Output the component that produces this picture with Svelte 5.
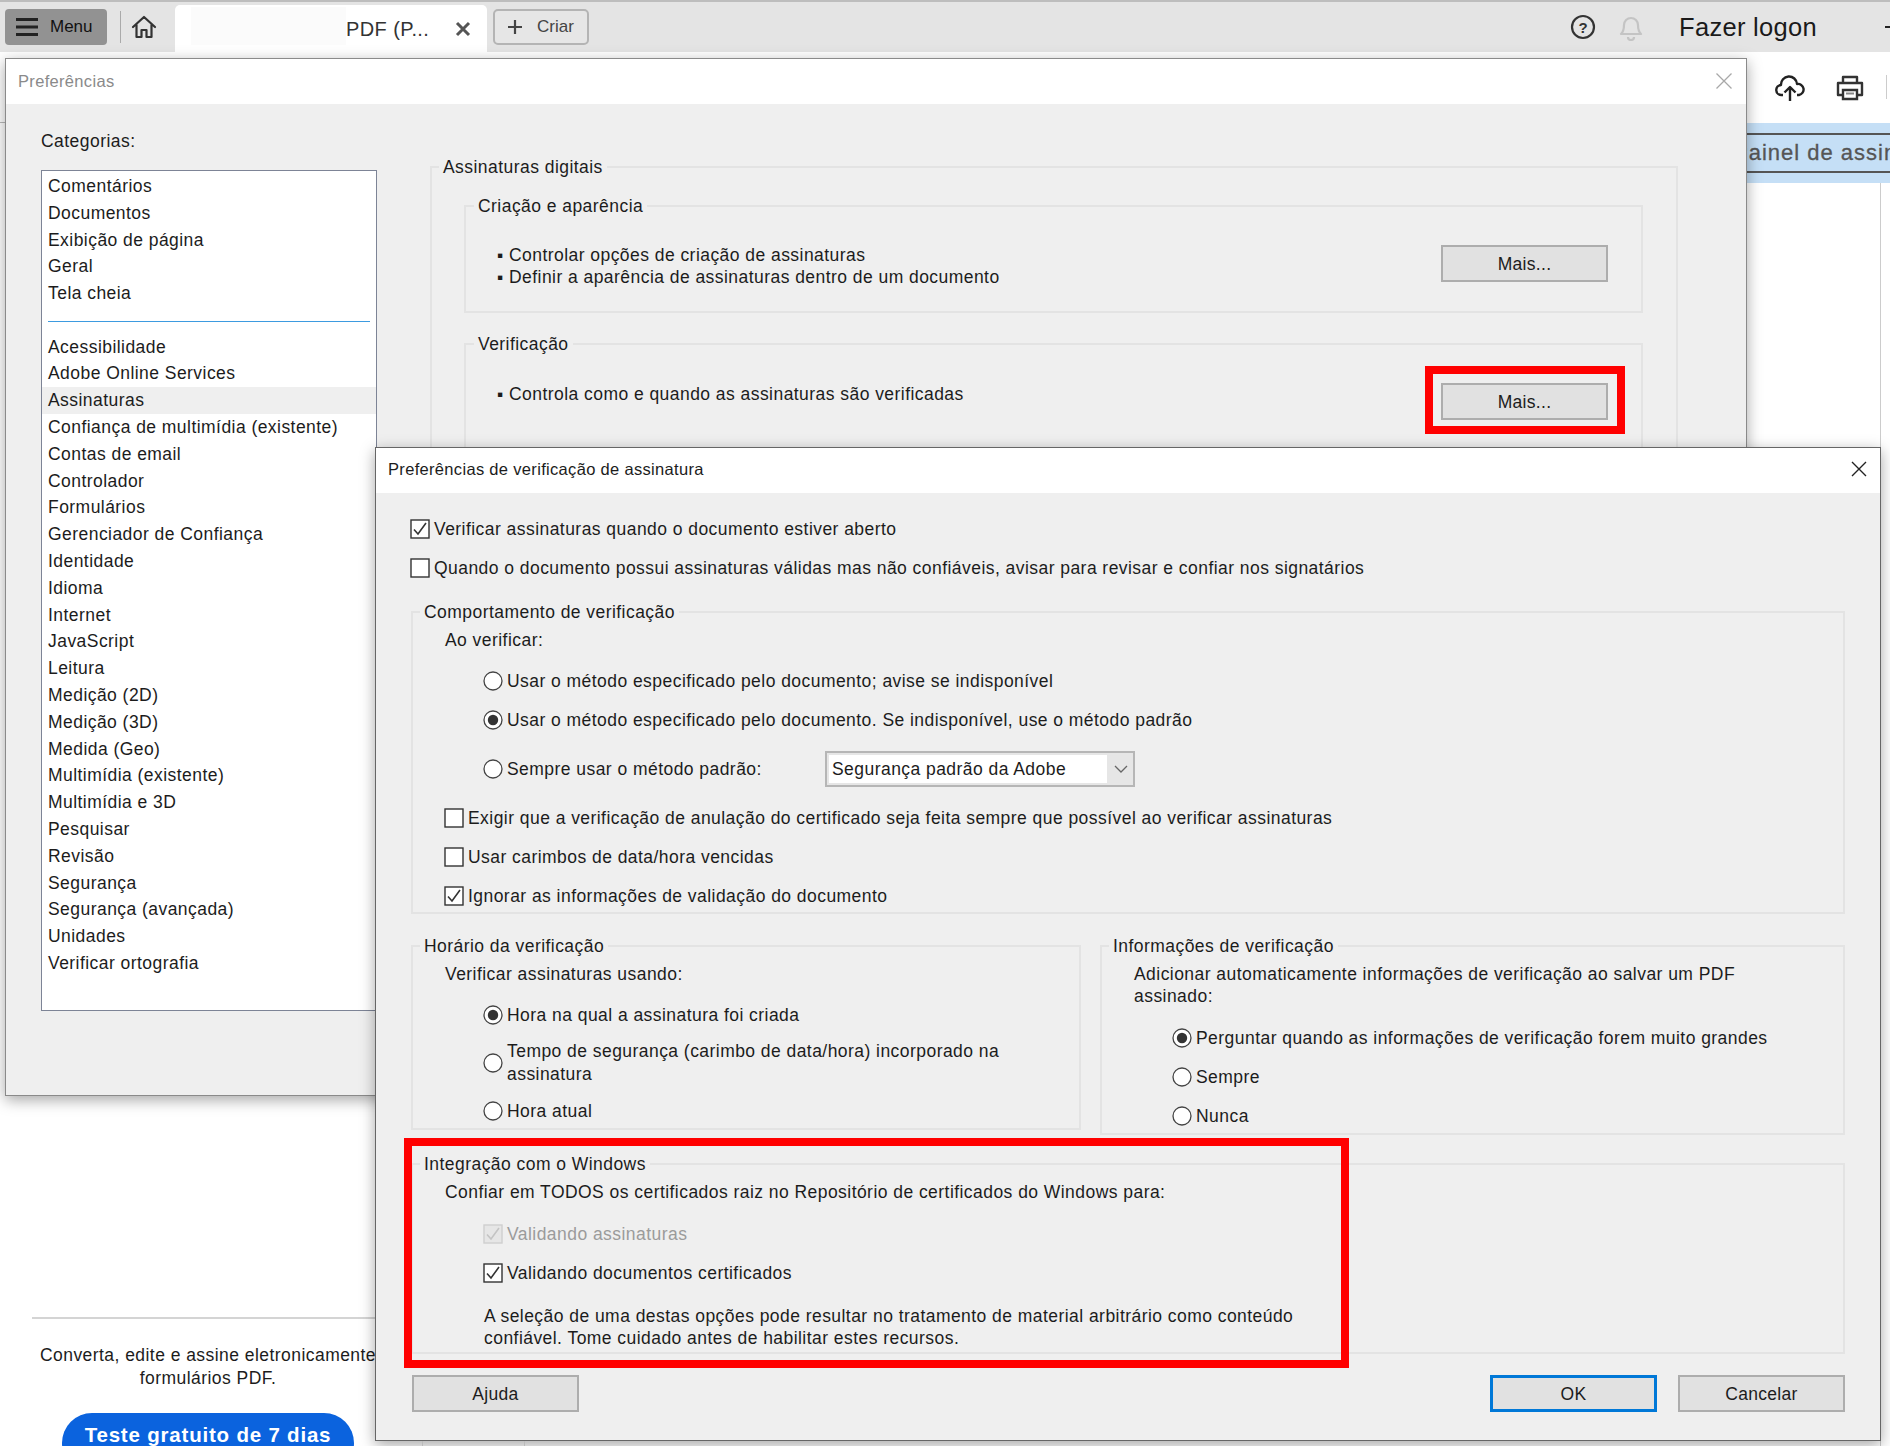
<script>
  const top = ['Comentários','Documentos','Exibição de página','Geral','Tela cheia'];
  const rest = ['Acessibilidade','Adobe Online Services','Assinaturas','Confiança de multimídia (existente)','Contas de email','Controlador','Formulários','Gerenciador de Confiança','Identidade','Idioma','Internet','JavaScript','Leitura','Medição (2D)','Medição (3D)','Medida (Geo)','Multimídia (existente)','Multimídia e 3D','Pesquisar','Revisão','Segurança','Segurança (avançada)','Unidades','Verificar ortografia'];
</script>

{#snippet check(label, on = false, off = false)}
  <label class="opt" class:off>
    <svg class="mark" width="20" height="20" viewBox="0 0 20 20">
      <rect x="1" y="1" width="18" height="18" fill={off ? '#e6e6e6' : '#fff'} stroke={off ? '#cfcfcf' : '#333'} stroke-width="1.4"/>
      {#if on}<path d="M4 10.5l4 4.5 8-11" fill="none" stroke={off ? '#c4c4c4' : '#333'} stroke-width="1.6"/>{/if}
    </svg>
    <span>{label}</span>
  </label>
{/snippet}

{#snippet radio(label, on = false)}
  <label class="opt">
    <svg class="mark" width="20" height="20" viewBox="0 0 20 20">
      <circle cx="10" cy="10" r="9" fill="#fff" stroke="#444" stroke-width="1.3"/>
      {#if on}<circle cx="10" cy="10" r="5.2" fill="#333"/>{/if}
    </svg>
    <span>{label}</span>
  </label>
{/snippet}

<div class="page">
  <header class="topbar">
    <button class="menu">
      <svg width="22" height="20" viewBox="0 0 22 20"><path d="M0 2.5h22M0 10h22M0 17.500h22" stroke="#222" stroke-width="3"/></svg>
      <span>Menu</span>
    </button>
    <i class="vsep"></i>
    <svg class="home" width="26" height="26" viewBox="0 0 26 26"><path d="M2 13L13 3l11 10M5.500 11v12h5v-7h5v7h5V11" fill="none" stroke="#333" stroke-width="2.200" stroke-linejoin="round" stroke-linecap="round"/></svg>
    <div class="tab">
      <i class="redact"></i>
      <span class="tabname">PDF (P...</span>
      <svg width="16" height="16" viewBox="0 0 16 16"><path d="M2 2l12 12M14 2L2 14" stroke="#555" stroke-width="3"/></svg>
    </div>
    <button class="create">
      <svg width="16" height="16" viewBox="0 0 16 16"><path d="M8 1v14M1 8h14" stroke="#444" stroke-width="2.200"/></svg>
      <span>Criar</span>
    </button>
    <div class="grow"></div>
    <svg width="26" height="26" viewBox="0 0 26 26"><circle cx="13" cy="13" r="11" fill="none" stroke="#333" stroke-width="2.200"/><text x="13" y="18.500" text-anchor="middle" class="q">?</text></svg>
    <svg class="bell" width="26" height="28" viewBox="0 0 26 28"><path d="M3 21c2-2 3-4 3-9a7 7 0 0 1 14 0c0 5 1 7 3 9zM10 24a3 3 0 0 0 6 0" fill="none" stroke="#c4c4c4" stroke-width="2.200" stroke-linejoin="round"/></svg>
    <span class="logon">Fazer logon</span>
    <i class="tick"></i>
  </header>

  <div class="toolbar">
    <svg width="30" height="28" viewBox="0 0 30 28"><path d="M8 20H6.500a5 5 0 0 1-.5-10 8 8 0 0 1 16-1 5.500 5.500 0 0 1 2 11h-2M15 26V12M9.500 17.500L15 12l5.500 5.500" fill="none" stroke="#222" stroke-width="2.400" stroke-linejoin="round"/></svg>
    <svg class="printer" width="28" height="26" viewBox="0 0 28 26"><path d="M7 8V2h14v6M7 20H2V8h24v12h-5" fill="none" stroke="#333" stroke-width="2.400" stroke-linejoin="round"/><path d="M7 15h14v9H7z" fill="none" stroke="#333" stroke-width="2.400"/><path d="M10 18.500h8" stroke="#888" stroke-width="2"/></svg>
    <i class="toolsep"></i>
  </div>

  <div class="band"><span class="signpanel">Painel de assinaturas</span></div>

  <main class="content">
    <aside class="promo">
      <hr />
      <p>Converta, edite e assine eletronicamente<br />formulários PDF.</p>
      <button class="trial">Teste gratuito de 7 dias</button>
    </aside>
  </main>

  <i class="notch"></i>

  <section class="dlg prefs">
    <div class="title muted">
      <span>Preferências</span>
      <svg width="16" height="16" viewBox="0 0 16 16"><path d="M.5.500l15 15M15.500.500l-15 15" stroke="#a8a8a8" stroke-width="1.300"/></svg>
    </div>
    <div class="prefbody">
      <div class="cats">
        <div class="catlabel">Categorias:</div>
        <div class="list">
          {#each top as t}<div class="item">{t}</div>{/each}
          <div class="sep"></div>
          {#each rest as t}<div class="item" class:sel={t === 'Assinaturas'}>{t}</div>{/each}
        </div>
      </div>
      <div class="panel">
        <fieldset class="outer">
          <legend>Assinaturas digitais</legend>
          <fieldset class="inner create-fs">
            <legend>Criação e aparência</legend>
            <div class="infobox">
              <div class="bullets">
                <div>▪ Controlar opções de criação de assinaturas</div>
                <div>▪ Definir a aparência de assinaturas dentro de um documento</div>
              </div>
              <button class="btn">Mais...</button>
            </div>
          </fieldset>
          <fieldset class="inner verify-fs">
            <legend>Verificação</legend>
            <div class="infobox">
              <div class="bullets one">▪ Controla como e quando as assinaturas são verificadas</div>
              <button class="btn">Mais...</button>
            </div>
          </fieldset>
        </fieldset>
      </div>
    </div>
  </section>
  <div class="redbox one-red"></div>

  <section class="dlg verify">
    <div class="title">
      <span>Preferências de verificação de assinatura</span>
      <svg width="16" height="16" viewBox="0 0 16 16"><path d="M1 1l14 14M15 1L1 15" stroke="#222" stroke-width="1.400"/></svg>
    </div>
    <div class="vbody">
      <div class="stack">
        {@render check('Verificar assinaturas quando o documento estiver aberto', true)}
        {@render check('Quando o documento possui assinaturas válidas mas não confiáveis, avisar para revisar e confiar nos signatários')}
      </div>

      <fieldset class="fs behave">
        <legend>Comportamento de verificação</legend>
        <div class="line">Ao verificar:</div>
        <div class="stack indent m19">
          {@render radio('Usar o método especificado pelo documento; avise se indisponível')}
          {@render radio('Usar o método especificado pelo documento. Se indisponível, use o método padrão', true)}
        </div>
        <div class="selrow indent">
          {@render radio('Sempre usar o método padrão:')}
          <div class="select">
            <span class="selval">Segurança padrão da Adobe</span>
            <svg width="14" height="8" viewBox="0 0 14 8"><path d="M1 1l6 6 6-6" fill="none" stroke="#666" stroke-width="1.300"/></svg>
          </div>
        </div>
        <div class="stack m20">
          {@render check('Exigir que a verificação de anulação do certificado seja feita sempre que possível ao verificar assinaturas')}
          {@render check('Usar carimbos de data/hora vencidas')}
          {@render check('Ignorar as informações de validação do documento', true)}
        </div>
      </fieldset>

      <div class="twocol">
        <fieldset class="fs when">
          <legend>Horário da verificação</legend>
          <div class="line">Verificar assinaturas usando:</div>
          <div class="stack indent m19 whenstack">
            {@render radio('Hora na qual a assinatura foi criada', true)}
            {@render radio('Tempo de segurança (carimbo de data/hora) incorporado na assinatura')}
            {@render radio('Hora atual')}
          </div>
        </fieldset>
        <fieldset class="fs info">
          <legend>Informações de verificação</legend>
          <div class="line">Adicionar automaticamente informações de verificação ao salvar um PDF<br />assinado:</div>
          <div class="stack indent m20">
            {@render radio('Perguntar quando as informações de verificação forem muito grandes', true)}
            {@render radio('Sempre')}
            {@render radio('Nunca')}
          </div>
        </fieldset>
      </div>

      <fieldset class="fs windows">
        <legend>Integração com o Windows</legend>
        <div class="line">Confiar em TODOS os certificados raiz no Repositório de certificados do Windows para:</div>
        <div class="stack indent m20">
          {@render check('Validando assinaturas', true, true)}
          {@render check('Validando documentos certificados', true)}
        </div>
        <p class="warn">A seleção de uma destas opções pode resultar no tratamento de material arbitrário como conteúdo<br />confiável. Tome cuidado antes de habilitar estes recursos.</p>
      </fieldset>

      <div class="actions">
        <button class="btn">Ajuda</button>
        <div class="grow"></div>
        <button class="btn primary">OK</button>
        <button class="btn">Cancelar</button>
      </div>
    </div>
  </section>
  <div class="redbox two-red"></div>
  <i class="under a"></i>
  <i class="under b"></i>
</div>

<style>
  :global(body) { margin: 0; background: #fff; }
  .page {
    position: relative; width: 1890px; height: 1446px; overflow: hidden;
    display: flex; flex-direction: column; background: #fff; color: #1c1c1c;
    font-family: "Liberation Sans", Arial, sans-serif; font-size: 17.5px; line-height: 22px; letter-spacing: .45px;
  }
  i { display: block; }
  button { font: inherit; color: inherit; padding: 0; cursor: default; }
  .grow { flex: 1; }

  .topbar {
    height: 52px; box-sizing: border-box; flex: none; display: flex; align-items: center; letter-spacing: 0;
    padding-left: 5px; background: #e4e4e4; border-top: 2px solid #bdbdbd;
  }
  .menu {
    width: 102px; height: 36px; background: #929292; border: 0; border-radius: 4px;
    display: flex; align-items: center; gap: 12px; padding-left: 11px; color: #111; font-size: 17px;
  }
  .vsep { width: 1px; height: 32px; background: #aaa; margin-left: 13px; }
  .home { margin-left: 10px; }
  .tab {
    width: 312px; height: 47px; margin-left: 18px; align-self: flex-end; background: #fff;
    border-radius: 5px 5px 0 0; position: relative; display: flex; align-items: center;
    padding-left: 171px; box-sizing: border-box;
  }
  .redact { position: absolute; left: 16px; top: 2px; width: 155px; height: 38px; background: #fbfbfb; }
  .tabname { font-size: 20px; color: #333; width: 109px; letter-spacing: .4px; }
  .create {
    width: 96px; height: 36px; margin-left: 6px; background: #e6e6e6; border: 2px solid #b4b4b4;
    border-radius: 5px; display: flex; align-items: center; gap: 14px; padding-left: 12px; color: #444; font-size: 17px;
  }
  .q { font: bold 15px "Liberation Sans", sans-serif; fill: #333; }
  .bell { margin-left: 22px; }
  .logon { font-size: 25.500px; margin-left: 35px; color: #1a1a1a; letter-spacing: .3px; }
  .tick { width: 5px; height: 2px; background: #222; margin-left: 68px; }

  .toolbar {
    height: 71px; flex: none; display: flex; align-items: flex-start; box-sizing: border-box;
    padding: 23px 0 0 1775px; background: #fff;
  }
  .printer { margin-left: 31px; }
  .toolsep { width: 1px; height: 24px; margin-left: 22px; background: #ccc; }
  .band {
    height: 60px; flex: none; box-sizing: border-box; background: #c5dff6; margin-left: 1700px; padding: 10px 0 0 24px;
    white-space: nowrap; overflow: hidden;
  }
  .signpanel {
    display: block; width: 300px; height: 40px; box-sizing: border-box; border-top: 2px solid #555; border-bottom: 2px solid #555;
    padding-left: 9px; font-size: 22px; line-height: 36px; color: #555; letter-spacing: 1px;
    -webkit-text-stroke: .3px #555;
  }
  .content { flex: 1; min-height: 0; display: flex; justify-content: flex-start; position: relative; }
  .content::after { content: ""; position: absolute; left: 1880px; top: 0; bottom: 0; width: 1px; background: #ccc; }
  .promo { margin: 1134px 0 0 32px; width: 352px; text-align: center; flex: none; }
  .promo hr { border: 0; height: 2px; background: #d4d4d4; margin: 0; width: 400px; }
  .promo p { margin: 25px 0 0; line-height: 23px; }
  .trial {
    display: block; margin: 23px 0 0 30px; width: 292px; height: 60px; border: 0; border-radius: 30px;
    background: #0b63de; color: #fff; font-weight: bold; font-size: 20.500px; letter-spacing: .8px; padding-bottom: 16px;
  }
  .notch { position: absolute; left: 0; top: 122px; width: 5px; height: 1px; background: #bbb; }

  .dlg {
    position: absolute; box-sizing: border-box; background: #efefef; border: 1px solid #8a8a8a;
    box-shadow: 0 4px 14px rgba(0,0,0,.35);
  }
  .prefs { left: 5px; top: 58px; width: 1742px; height: 1038px; overflow: hidden; }
  .verify { left: 375px; top: 447px; width: 1506px; height: 994px; border-color: #666; }
  .title {
    height: 45px; box-sizing: border-box; background: #fff; display: flex; align-items: center; justify-content: space-between;
    padding: 0 13px 4px 12px; font-size: 16.500px; letter-spacing: .32px;
  }
  .title.muted { color: #8a8a8a; padding: 0 14px 2px 12px; }

  .prefbody { display: flex; }
  .cats { width: 336px; margin-left: 35px; flex: none; }
  .catlabel { margin-top: 26px; height: 22px; }
  .list { margin-top: 18px; height: 841px; box-sizing: border-box; border: 1px solid #7d8496; background: #fff; padding-top: 2px; overflow: hidden; }
  .item { height: 26.800px; line-height: 26.800px; padding-left: 6px; }
  .item.sel { background: #efefef; }
  .sep { height: 26.600px; box-sizing: border-box; margin: 0 6px; position: relative; }
  .sep::after { content: ""; position: absolute; left: 0; right: 0; top: 14px; height: 1.500px; background: #3d9be0; }
  .panel { margin-left: 53px; width: 1248px; flex: none; }

  fieldset { margin: 0; min-width: 0; box-sizing: border-box; border: 2px solid #e3e3e3; }
  legend { padding: 0 4px; }
  .outer { margin-top: 52px; padding: 17px 33px 0 32px; height: 900px; }
  .outer > legend { margin-left: -25px; }
  .inner { padding: 0 33px 0 0; }
  .inner > legend { margin-left: 8px; }
  .create-fs { height: 118px; }
  .verify-fs { height: 220px; margin-top: 20px; }
  .infobox { display: flex; justify-content: space-between; align-items: flex-start; padding-left: 31px; }
  .create-fs .infobox { margin-top: 28px; }
  .create-fs .bullets { margin-top: -1px; }
  .verify-fs .infobox { margin-top: 28px; }
  .bullets.one { margin-top: 0; }
  .btn {
    width: 167px; height: 37px; box-sizing: border-box; background: #e1e1e1; border: 2px solid #adadad; flex: none; letter-spacing: .3px;
  }
  .primary { border: 3px solid #0078d7; }

  .vbody { padding: 25px 35px 0; }
  .stack { display: flex; flex-direction: column; gap: 17px; }
  .opt { display: flex; align-items: center; gap: 4px; min-height: 22px; }
  .opt .mark { flex: none; margin-left: -1px; }
  .opt.off { color: #9b9b9b; }
  .indent { margin-left: 39px; }
  .m19 { margin-top: 19px; }
  .m20 { margin-top: 20px; }
  .fs { padding: 6px 20px 5px 32px; }
  .fs > legend { margin-left: -25px; }
  .behave { margin-top: 22px; }
  .selrow { display: flex; align-items: center; height: 36px; margin-top: 20px; }
  .selrow :global(.opt) { width: 341px; flex: none; }
  .select {
    width: 310px; height: 36px; box-sizing: border-box; border: 2px solid #b6b6b6; background: #e6e6e6;
    display: flex; align-items: center; padding: 2px 0 2px 2px;
  }
  .selval { width: 278px; height: 100%; background: #fff; padding-left: 3px; box-sizing: border-box; line-height: 28px; }
  .select svg { margin-left: 7px; }
  .twocol { display: flex; align-items: flex-start; gap: 19px; margin-top: 21px; }
  .when { width: 670px; padding-bottom: 6px; }
  .whenstack { gap: 14px; }
  .whenstack :global(.opt:nth-child(2)) { line-height: 23px; padding-right: 40px; }
  .info { width: 745px; padding-bottom: 6px; }
  .windows { margin-top: 18px; padding-bottom: 3px; }
  .warn { margin: 21px 0 0 39px; line-height: 22px; }
  .actions { display: flex; gap: 21px; margin-top: 21px; padding-left: 1px; }

  .redbox { position: absolute; box-sizing: border-box; border: 8px solid #ff0000; }
  .one-red { left: 1425px; top: 366px; width: 200px; height: 68px; }
  .two-red { left: 404px; top: 1138px; width: 945px; height: 230px; }
  .under { position: absolute; top: 1441px; height: 5px; width: 1px; background: #bbb; }
  .under.a { left: 422px; }
  .under.b { left: 524px; }
</style>
